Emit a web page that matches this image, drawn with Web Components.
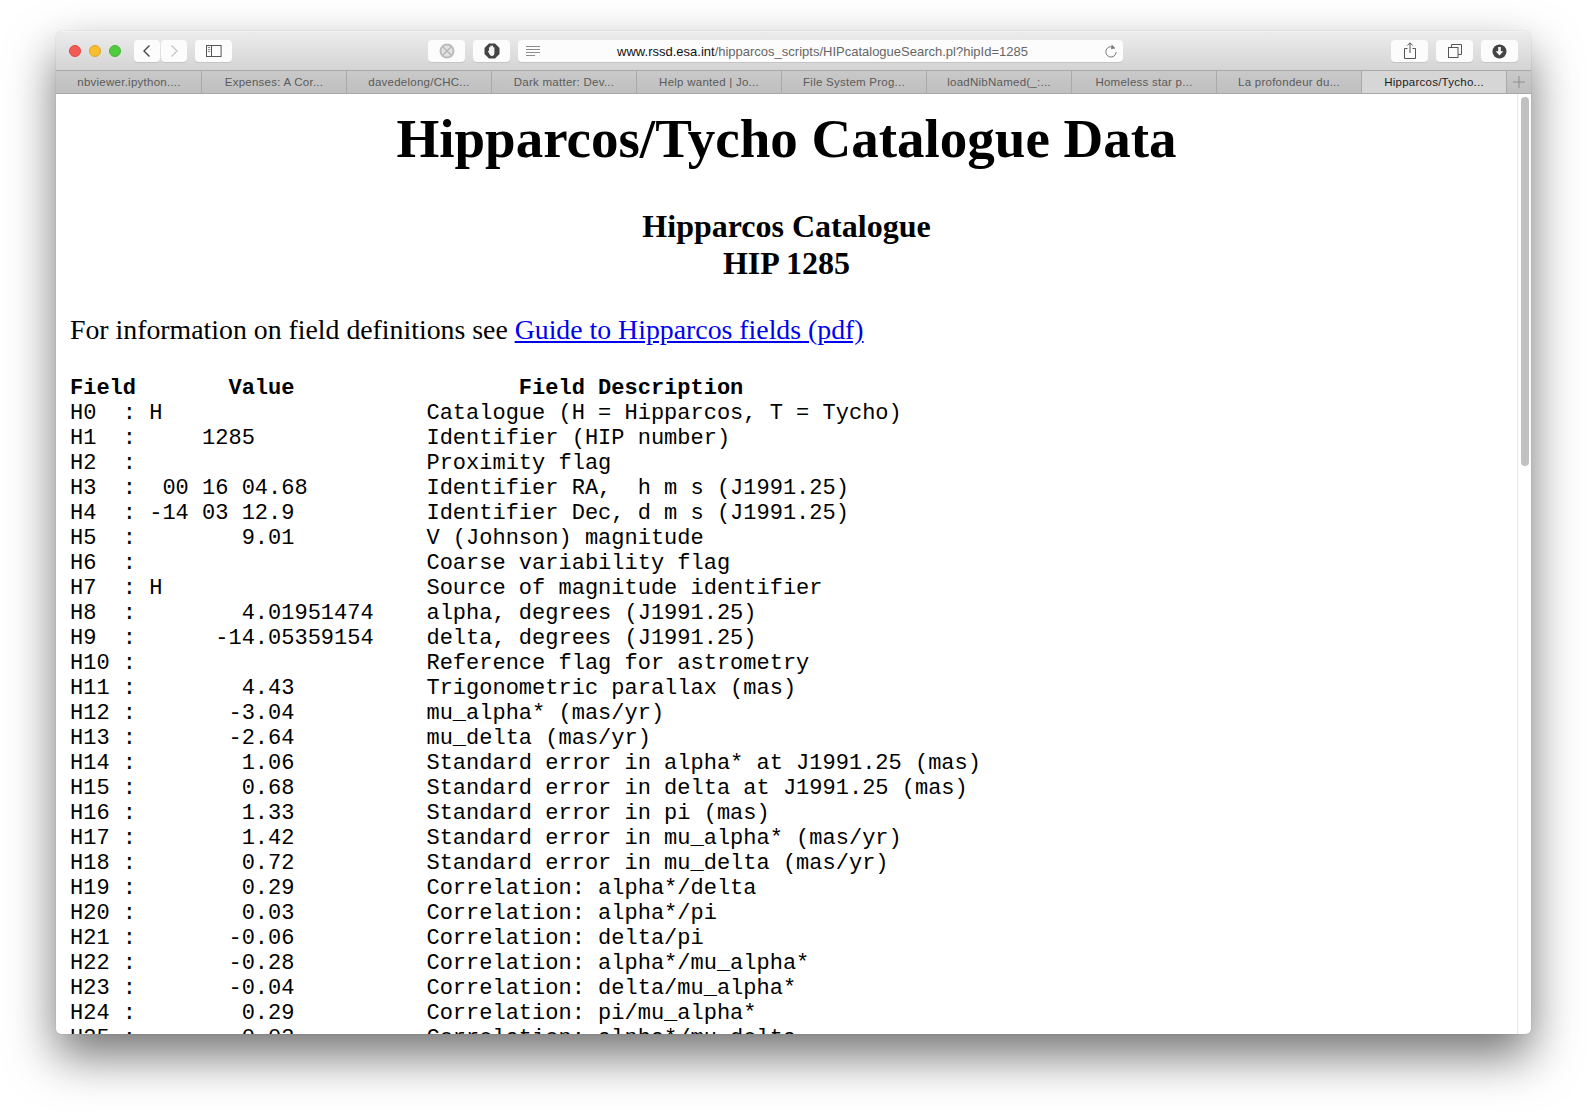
<!DOCTYPE html>
<html lang="en">
<head>
<meta charset="utf-8">
<title>Hipparcos/Tycho Catalogue Data</title>
<style>
  html, body { margin: 0; background: #fff; }
  body { padding: 31px 56px 0; height: 1114px; box-sizing: border-box; overflow: hidden; }
</style>
</head>
<body>
<safari-window>
  <safari-toolbar slot="toolbar"></safari-toolbar>
  <tab-bar slot="tabs">
    <tab-item>nbviewer.ipython....</tab-item>
    <tab-item>Expenses: A Cor...</tab-item>
    <tab-item>davedelong/CHC...</tab-item>
    <tab-item>Dark matter: Dev...</tab-item>
    <tab-item>Help wanted | Jo...</tab-item>
    <tab-item>File System Prog...</tab-item>
    <tab-item>loadNibNamed(_:...</tab-item>
    <tab-item>Homeless star p...</tab-item>
    <tab-item>La profondeur du...</tab-item>
    <tab-item active>Hipparcos/Tycho...</tab-item>
  </tab-bar>
  <hip-page></hip-page>
</safari-window>

<script>
class SafariWindow extends HTMLElement {
  connectedCallback() {
    this.attachShadow({ mode: 'open' });
    this.shadowRoot.innerHTML = `
      <style>
        :host {
          display: flex;
          flex-direction: column;
          width: 1475px;
          height: 1003px;
          border-radius: 6px 6px 5px 5px;
          overflow: hidden;
          background: #fff;
          box-shadow: 0 22px 48px rgba(0, 0, 0, 0.55), 0 0 1px rgba(0, 0, 0, 0.35);
        }
        .content {
          flex: 1;
          min-height: 0;
          display: flex;
        }
        .page { flex: 1; min-width: 0; overflow: hidden; }
        .scroll {
          flex: none;
          width: 14px;
          border-left: 1px solid #e6e6e6;
          padding: 3px 3px 0 3px;
          box-sizing: border-box;
        }
        .thumb {
          width: 8px;
          height: 369px;
          border-radius: 4px;
          background: #c1c1c1;
        }
      </style>
      <slot name="toolbar"></slot>
      <slot name="tabs"></slot>
      <div class="content">
        <div class="page"><slot></slot></div>
        <div class="scroll"><div class="thumb"></div></div>
      </div>
    `;
  }
}

class SafariToolbar extends HTMLElement {
  connectedCallback() {
    this.attachShadow({ mode: 'open' });
    this.shadowRoot.innerHTML = `
      <style>
        :host {
          display: flex;
          align-items: center;
          height: 39px;
          box-sizing: border-box;
          padding: 0 13px 0 13px;
          background: linear-gradient(#ececec, #d4d4d4);
          border-top: 1px solid #f2f2f2;
          font-family: "Liberation Sans", Arial, sans-serif;
        }
        .lights { display: flex; gap: 8px; margin-right: 13px; }
        .light { width: 12px; height: 12px; border-radius: 50%; box-sizing: border-box; }
        .red { background: #f25a55; border: 1px solid #e2453f; }
        .yellow { background: #f7bf2d; border: 1px solid #dfa52a; }
        .green { background: #4fcb3e; border: 1px solid #45b435; }
        .btn {
          height: 22px;
          width: 37px;
          flex: none;
          background: #fcfcfc;
          border-radius: 4px;
          box-shadow: 0 1px 0 #c4c4c4;
          display: flex;
          align-items: center;
          justify-content: center;
        }
        .nav { width: 26px; }
        .url {
          width: 605px;
          height: 22px;
          flex: none;
          background: #fcfcfc;
          border-radius: 4px;
          box-shadow: 0 1px 0 #c4c4c4;
          display: flex;
          align-items: center;
          justify-content: space-between;
          padding: 0 5px 0 8px;
          box-sizing: border-box;
          margin-left: 8px;
        }
        .addr { font-size: 13px; color: #666; white-space: nowrap; }
        .addr b { font-weight: normal; color: #111; }
        svg { display: block; }
      </style>
      <div class="lights">
        <div class="light red"></div><div class="light yellow"></div><div class="light green"></div>
      </div>
      <div class="btn nav" style="margin-right:1px">
        <svg width="10" height="14" viewBox="0 0 10 14"><path d="M7.5 1.5 2 7l5.5 5.5" fill="none" stroke="#444" stroke-width="1.4"/></svg>
      </div>
      <div class="btn nav" style="margin-right:8px">
        <svg width="10" height="14" viewBox="0 0 10 14"><path d="M2.5 1.5 8 7l-5.5 5.5" fill="none" stroke="#c8c8c8" stroke-width="1.4"/></svg>
      </div>
      <div class="btn" style="margin-right:196px">
        <svg width="16" height="12" viewBox="0 0 16 12"><rect x=".5" y=".5" width="14.6" height="11" fill="none" stroke="#555"/><path d="M5.5 .5v11" stroke="#555"/><path d="M1.8 2.5h2.4M1.8 4.5h2.4M1.8 6.5h2.4" stroke="#888"/></svg>
      </div>
      <div class="btn" style="margin-right:8px">
        <svg width="16" height="16" viewBox="0 0 16 16"><circle cx="8" cy="8" r="7.500" fill="#bcbcbc"/><circle cx="8" cy="8" r="5.500" fill="#e2e2e2"/><path d="M4 4l8 8M12 4 4 12" stroke="#b4b4b4" stroke-width="1.300"/></svg>
      </div>
      <div class="btn">
        <svg width="16" height="16" viewBox="0 0 16 16"><path d="M5 .5h6L15.500 5v6L11 15.500H5L.5 11V5z" fill="#444"/><path d="M5 8V4.500a.7.7 0 0 1 1.300 0V3.300a.7.7 0 0 1 1.400 0v-.1a.7.7 0 0 1 1.400 0v1.200a.7.7 0 0 1 1.300 0V10c0 2-1 3-2.400 3S6 12.200 5.400 11L4 8.500c-.3-.8.500-1.200 1-.5z" fill="#f4f4f4"/></svg>
      </div>
      <div class="url">
        <svg width="15" height="11" viewBox="0 0 15 11"><path d="M0 .5h14M0 3.500h14M0 6.500h14M0 9.500h9" stroke="#8c8c8c"/></svg>
        <span class="addr"><b>www.rssd.esa.int</b>/hipparcos_scripts/HIPcatalogueSearch.pl?hipId=1285</span>
        <svg width="14" height="15" viewBox="0 0 14 15"><path d="M10.800 4.300A5.200 5.200 0 1 0 12.200 8" fill="none" stroke="#777"/><path d="M7.800 0.500 11 4.200 7 5.200z" fill="#777"/></svg>
      </div>
      <div class="btn" style="margin-left:268px;margin-right:8px">
        <svg width="14" height="18" viewBox="0 0 14 18"><path d="M4.500 6.500H1.500v10h11v-10H9.500M7 11V1M4.300 3.500 7 .8l2.700 2.700" fill="none" stroke="#555"/></svg>
      </div>
      <div class="btn" style="margin-right:8px">
        <svg width="14" height="14" viewBox="0 0 14 14"><rect x=".5" y="3.500" width="9.500" height="10" fill="none" stroke="#555"/><path d="M3.500 3.500V.5h10v10H10" fill="none" stroke="#555"/></svg>
      </div>
      <div class="btn">
        <svg width="15" height="15" viewBox="0 0 15 15"><circle cx="7.500" cy="7.500" r="7" fill="#444"/><path d="M6.200 3h2.600v4.200h2.500L7.500 11.500 3.700 7.200h2.500z" fill="#fcfcfc"/></svg>
      </div>
    `;
  }
}

class TabBar extends HTMLElement {
  connectedCallback() {
    this.attachShadow({ mode: 'open' });
    this.shadowRoot.innerHTML = `
      <style>
        :host {
          display: flex;
          height: 24px;
          box-sizing: border-box;
          padding-left: 1px;
          background: linear-gradient(#c9c9c9, #bfbfbf);
          border-top: 1px solid #a9a9a9;
          border-bottom: 1px solid #a9a9a9;
        }
        .plus {
          flex: 1;
          display: flex;
          align-items: center;
          justify-content: center;
        }
      </style>
      <slot></slot>
      <div class="plus">
        <svg width="12" height="12" viewBox="0 0 12 12"><path d="M6 0v12M0 6h12" stroke="#8d8d8d"/></svg>
      </div>
    `;
  }
}

class TabItem extends HTMLElement {
  connectedCallback() {
    this.attachShadow({ mode: 'open' });
    this.shadowRoot.innerHTML = `
      <style>
        :host {
          display: flex;
          align-items: center;
          justify-content: center;
          width: 145px;
          box-sizing: border-box;
          border-right: 1px solid #a9a9a9;
          font: 11.5px "Liberation Sans", Arial, sans-serif;
          letter-spacing: 0.25px;
          color: #5a5a5a;
          white-space: nowrap;
        }
        :host([active]) {
          background: #d6d6d6;
          color: #1c1c1c;
        }
      </style>
      <slot></slot>
    `;
  }
}

const ROWS = [
  ['H0 ', 'H', 'Catalogue (H = Hipparcos, T = Tycho)'],
  ['H1 ', '    1285', 'Identifier (HIP number)'],
  ['H2 ', '', 'Proximity flag'],
  ['H3 ', ' 00 16 04.68', 'Identifier RA,  h m s (J1991.25)'],
  ['H4 ', '-14 03 12.9', 'Identifier Dec, d m s (J1991.25)'],
  ['H5 ', '       9.01', 'V (Johnson) magnitude'],
  ['H6 ', '', 'Coarse variability flag'],
  ['H7 ', 'H', 'Source of magnitude identifier'],
  ['H8 ', '       4.01951474', 'alpha, degrees (J1991.25)'],
  ['H9 ', '     -14.05359154', 'delta, degrees (J1991.25)'],
  ['H10', '', 'Reference flag for astrometry'],
  ['H11', '       4.43', 'Trigonometric parallax (mas)'],
  ['H12', '      -3.04', 'mu_alpha* (mas/yr)'],
  ['H13', '      -2.64', 'mu_delta (mas/yr)'],
  ['H14', '       1.06', 'Standard error in alpha* at J1991.25 (mas)'],
  ['H15', '       0.68', 'Standard error in delta at J1991.25 (mas)'],
  ['H16', '       1.33', 'Standard error in pi (mas)'],
  ['H17', '       1.42', 'Standard error in mu_alpha* (mas/yr)'],
  ['H18', '       0.72', 'Standard error in mu_delta (mas/yr)'],
  ['H19', '       0.29', 'Correlation: alpha*/delta'],
  ['H20', '       0.03', 'Correlation: alpha*/pi'],
  ['H21', '      -0.06', 'Correlation: delta/pi'],
  ['H22', '      -0.28', 'Correlation: alpha*/mu_alpha*'],
  ['H23', '      -0.04', 'Correlation: delta/mu_alpha*'],
  ['H24', '       0.29', 'Correlation: pi/mu_alpha*'],
  ['H25', '       0.03', 'Correlation: alpha*/mu_delta']
];

class HipPage extends HTMLElement {
  connectedCallback() {
    this.attachShadow({ mode: 'open' });
    const lines = ROWS.map(r => (r[0] + ' : ' + r[1]).padEnd(27) + r[2]).join('\n');
    this.shadowRoot.innerHTML = `
      <style>
        :host {
          display: block;
          padding: 0 14px;
          font-family: "Liberation Serif", "Times New Roman", serif;
          color: #000;
        }
        h1 {
          margin: 13px 0 0;
          font-size: 55px;
          line-height: 64px;
          text-align: center;
        }
        h2 {
          margin: 37px 0 0;
          font-size: 32px;
          line-height: 37px;
          text-align: center;
        }
        p {
          margin: 31px 0 0;
          font-size: 27.8px;
          line-height: 33px;
        }
        a { color: #0000ee; text-decoration: underline; }
        pre {
          margin: 30px 0 0;
          font: 22px/25px "Liberation Mono", "Courier New", monospace;
        }
      </style>
      <h1>Hipparcos/Tycho Catalogue Data</h1>
      <h2>Hipparcos Catalogue<br>HIP 1285</h2>
      <p>For information on field definitions see <a href="#">Guide to Hipparcos fields (pdf)</a></p>
      <pre><b>Field       Value                 Field Description</b>
${lines}</pre>
    `;
  }
}

customElements.define('safari-window', SafariWindow);
customElements.define('safari-toolbar', SafariToolbar);
customElements.define('tab-bar', TabBar);
customElements.define('tab-item', TabItem);
customElements.define('hip-page', HipPage);
</script>
</body>
</html>
